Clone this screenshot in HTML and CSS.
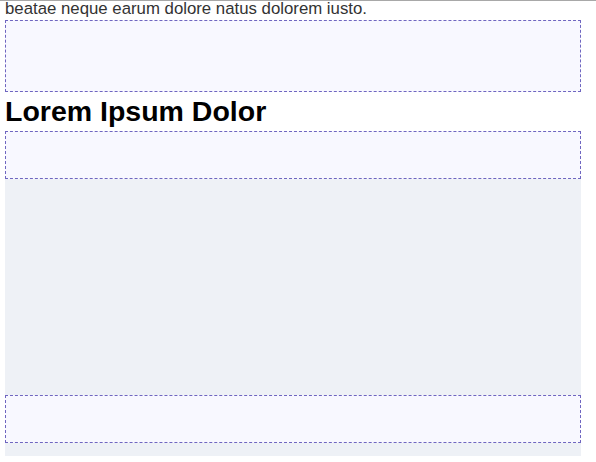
FILE: index.html
```html
<!DOCTYPE html>
<html>
<head>
<meta charset="utf-8">
<link rel="stylesheet" href="styles.css">
</head>
<body>
<div class="topline"></div>
<main class="page">
  <p class="lead">beatae neque earum dolore natus dolorem iusto.</p>
  <div class="slot slot-tall"></div>
  <h2 class="title">Lorem Ipsum Dolor</h2>
  <div class="slot slot-short"></div>
  <section class="panel">
    <div class="slot slot-short"></div>
  </section>
</main>
</body>
</html>
```

FILE: styles.css
```css
html, body {
  margin: 0;
  padding: 0;
  background: #ffffff;
  overflow: hidden;
}
body {
  font-family: "Liberation Sans", Arial, sans-serif;
  color: #222;
}
.topline {
  height: 1px;
  background: #a8a8a8;
}
.page {
  width: 576px;
  margin-left: 5px;
}
.lead {
  margin: 0;
  font-size: 16.8px;
  line-height: 16px;
  color: #333;
}
.slot {
  box-sizing: border-box;
  background: #f8f8ff;
  border: 1px dashed #6f66c0;
}
.slot-tall {
  margin-top: 3px;
  height: 72px;
}
.slot-short {
  height: 48px;
}
.title {
  margin: 0;
  font-size: 28.5px;
  line-height: 39px;
  font-weight: bold;
  color: #000;
}
.panel {
  background: #eef1f6;
  padding: 216px 0 13px 0;
}
```
